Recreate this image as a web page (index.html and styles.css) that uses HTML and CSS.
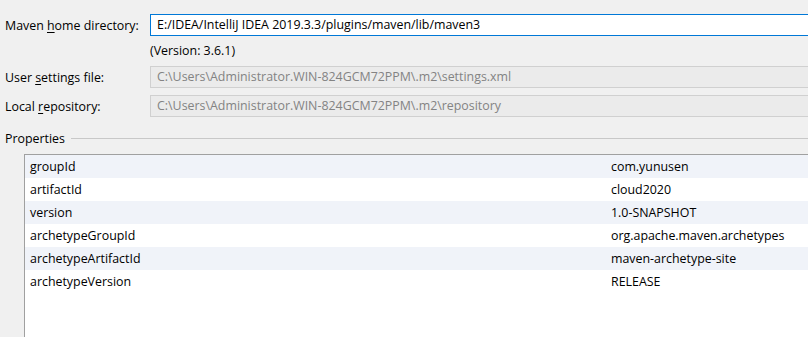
FILE: index.html
```html
<!DOCTYPE html>
<html>

<head>
    <link rel="stylesheet" href="styles.css">
</head>

<body>

    <div id="settings">
        <div class="row first">
            <label class="label">Maven <u>h</u>ome directory:</label>
            <div class="field active">E:/IDEA/IntelliJ IDEA 2019.3.3/plugins/maven/lib/maven3</div>
        </div>
        <div class="version">(Version: 3.6.1)</div>

        <div class="row">
            <label class="label">User <u>s</u>ettings file:</label>
            <div class="field disabled">C:\Users\Administrator.WIN-824GCM72PPM\.m2\settings.xml</div>
        </div>
        <div class="row">
            <label class="label">Local <u>r</u>epository:</label>
            <div class="field disabled">C:\Users\Administrator.WIN-824GCM72PPM\.m2\repository</div>
        </div>

        <div class="group-title">
            <span>Properties</span>
            <div class="rule"></div>
        </div>

        <div id="props">
            <div class="prop"><span class="key">groupId</span><span class="value">com.yunusen</span></div>
            <div class="prop"><span class="key">artifactId</span><span class="value">cloud2020</span></div>
            <div class="prop"><span class="key">version</span><span class="value">1.0-SNAPSHOT</span></div>
            <div class="prop"><span class="key">archetypeGroupId</span><span class="value">org.apache.maven.archetypes</span></div>
            <div class="prop"><span class="key">archetypeArtifactId</span><span class="value">maven-archetype-site</span></div>
            <div class="prop"><span class="key">archetypeVersion</span><span class="value">RELEASE</span></div>
        </div>
    </div>

</body>

</html>
```

FILE: styles.css
```css
body {
    font-family: "Open Sans", "Noto Sans CJK SC", sans-serif;
    font-size: 12.4px;
    background-color: #f0f0f0;
    color: #000000;
    margin: 0;
    overflow: hidden;
}

#settings {
    padding-top: 14px;
}

.row {
    display: flex;
    align-items: center;
    height: 22px;
    margin-bottom: 7px;
}

.row.first {
    margin-bottom: 0;
}

.label {
    width: 145px;
    padding-left: 5px;
    flex-shrink: 0;
}

.label u {
    text-decoration-thickness: 1px;
    text-underline-offset: 2px;
}

.field {
    flex-grow: 1;
    height: 20px;
    line-height: 20px;
    padding-left: 6px;
    white-space: nowrap;
    margin-right: -20px;
}

.field.active {
    background-color: #ffffff;
    border: 1px solid #0078d7;
}

.field.disabled {
    background-color: #ebebeb;
    border: 1px solid #d0d0d0;
    color: #838383;
}

.version {
    padding-left: 150px;
    height: 30px;
    line-height: 30px;
}

.group-title {
    display: flex;
    align-items: center;
    padding-left: 5px;
    margin-top: 11px;
    height: 20px;
}

.rule {
    flex-grow: 1;
    height: 1px;
    background-color: #c8c8c8;
    margin-left: 6px;
}

#props {
    margin-top: 6px;
    margin-left: 24px;
    height: 182px;
    background-color: #ffffff;
    border-top: 1px solid #a0a0a0;
    border-left: 1px solid #a0a0a0;
}

.prop {
    display: flex;
    height: 23px;
    line-height: 23px;
}

.prop:nth-child(odd) {
    background-color: #f0f3f9;
}

.key {
    width: 581px;
    padding-left: 5px;
}
```
